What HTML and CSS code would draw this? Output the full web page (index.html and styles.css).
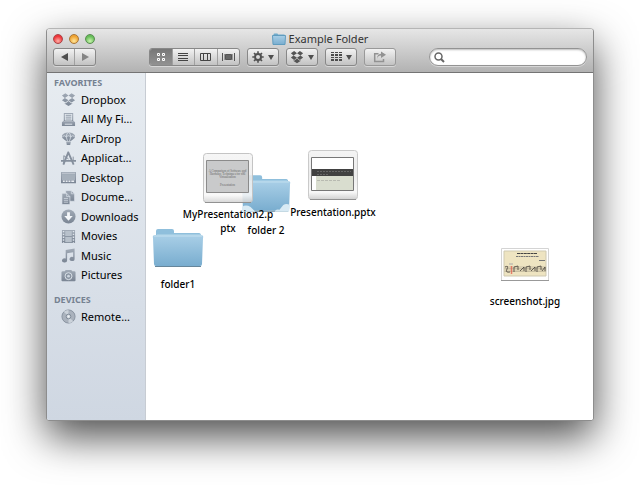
FILE: index.html
```html
<!DOCTYPE html>
<html lang="en">
<head>
<meta charset="utf-8">
<title>Example Folder</title>
<link rel="stylesheet" href="styles.css">
</head>
<body>
<svg class="defs" aria-hidden="true">
  <defs>
    <linearGradient id="blue" x1="0" y1="0" x2="0" y2="1"><stop offset="0" stop-color="#a9cfe7"/><stop offset="1" stop-color="#79adcf"/></linearGradient>
    <linearGradient id="frame" x1="0" y1="0" x2="0" y2="1"><stop offset="0" stop-color="#f4f4f4"/><stop offset=".5" stop-color="#ececec"/><stop offset=".85" stop-color="#f8f8f8"/><stop offset="1" stop-color="#d0d0d0"/></linearGradient>
    <linearGradient id="steel" x1="0" y1="0" x2="0" y2="1"><stop offset="0" stop-color="#a2abb7"/><stop offset="1" stop-color="#7a8594"/></linearGradient>
    <symbol id="dropbox" viewBox="0 0 16 16"><path d="M4.7 1.2 8 3.8 4.1 6.3 1 3.8zM11.3 1.2 15 3.8 11.9 6.3 8 3.8zM1 8.7 4.1 6.3 8 8.8 4.7 11.3zM15 8.7 11.9 6.3 8 8.8 11.3 11.3zM4 11.8 4.8 12.3 8 9.7 11.2 12.3 12 11.8V12.6L8 15 4 12.6z"/></symbol>
    <symbol id="folder" viewBox="0 0 52 40"><path d="M4 8V3Q4 1 6 1H20Q22 1 22 3V5H47Q49 5 49 8V14H4z" fill="#8fbfdc"/><path d="M5 7H48" stroke="#b6d8eb"/><path d="M1 10Q0 7 3 7H49Q52 7 51 10L50 36Q50 38 48 38H4Q2 38 2 36z" fill="url(#blue)"/><path d="M2 8H50" stroke="#c4e0ef" stroke-width="1"/><path d="M3 38.5H49" stroke="#66869b" stroke-width="1"/></symbol>
  </defs>
</svg>
<main class="window">
  <header class="toolbar">
    <div class="titlebar">
      <div class="lights">
        <button class="light red" aria-label="Close"></button>
        <button class="light amber" aria-label="Minimize"></button>
        <button class="light green" aria-label="Zoom"></button>
      </div>
      <h1 class="title">
        <svg width="14" height="12" viewBox="0 0 14 12"><path d="M1.5 2.5V1.5Q1.5 .5 2.5 .5H5Q6 .5 6 1.5H12.5V3H1.5z" fill="#6faacb"/><path d="M.5 2.5H13.5L13 11.5H1z" fill="url(#blue)" stroke="#609cbe"/></svg>
        Example Folder
      </h1>
    </div>
    <div class="tools">
      <div class="group nav">
        <button aria-label="Back"><svg width="9" height="8"><path d="M8 0V8L1 4z" fill="#4f4f4f"/></svg></button>
        <button aria-label="Forward"><svg width="9" height="8"><path d="M1 0V8L8 4z" fill="#858585"/></svg></button>
      </div>
      <div class="group views">
        <button class="active" aria-label="Icon view"><svg width="10" height="10" fill="none" stroke="#fff"><path d="M1.5 1.5h2v2h-2zM6.5 1.5h2v2h-2zM1.5 6.5h2v2h-2zM6.5 6.5h2v2h-2z"/></svg></button>
        <button aria-label="List view"><svg width="10" height="10" fill="#444"><path d="M0 1H10V2H0zM0 3H10V4H0zM0 6H10V7H0zM0 8H10V9H0z"/></svg></button>
        <button aria-label="Column view"><svg width="11" height="10" fill="none" stroke="#444"><path d="M.5 1.5H10.5V8.500H.5zM3.5 1.500V9M7.5 1.500V9"/></svg></button>
        <button aria-label="Cover flow"><svg width="13" height="10" stroke="#555"><path d="M.5 1V9M12.5 1V9" /><path d="M2.500 2V8M10.500 2V8" stroke="#999"/><path d="M3.500 2.500h6v5h-6z" fill="#666"/></svg></button>
      </div>
      <button class="tool" aria-label="Action"><svg width="12" height="12" viewBox="0 0 12 12"><circle cx="6" cy="6" r="3" fill="none" stroke="#505050" stroke-width="2"/><path d="M6 .3V2.5M6 9.5V11.7M.3 6H2.5M9.5 6H11.7M2 2 3.5 3.5M8.5 8.5 10 10M10 2 8.5 3.5M3.5 8.5 2 10" stroke="#505050" stroke-width="1.6"/></svg><svg class="caret" width="6" height="5"><path d="M0 0H6L3 5z"/></svg></button>
      <button class="tool" aria-label="Dropbox"><svg width="14" height="14" fill="#555"><use href="#dropbox"/></svg><svg class="caret" width="6" height="5"><path d="M0 0H6L3 5z"/></svg></button>
      <button class="tool" aria-label="Arrange"><svg width="11" height="10" viewBox="0 0 11 10" fill="#4c4c4c"><path d="M0 0H3V1H0zM4 0H7V1H4zM8 0H11V1H8zM0 2H3V4H0zM4 2H7V4H4zM8 2H11V4H8zM0 5H3V6H0zM4 5H7V6H4zM8 5H11V6H8zM0 7H3V9H0zM4 7H7V9H4zM8 7H11V9H8z"/></svg><svg class="caret" width="6" height="5"><path d="M0 0H6L3 5z"/></svg></button>
      <button class="tool share" aria-label="Share"><svg width="14" height="12" fill="none" stroke="#929292" stroke-width="1.5"><path d="M5.5 2.7H1.7V10.5H10.5V8"/><path d="M4 8Q4.5 4.5 8 4.5V7L13 3.7 8 .5V2.8Q4 3 4 8z" fill="#929292" stroke="none"/></svg></button>
      <label class="search"><svg width="11" height="11" fill="none" stroke="#666"><circle cx="4.5" cy="4.5" r="3.5" stroke-width="1.5"/><path d="M7 7 10 10" stroke-width="2"/></svg><input type="search" aria-label="Search"></label>
    </div>
  </header>
  <div class="content">
    <nav class="sidebar">
      <h2>FAVORITES</h2>
      <ul class="favorites">
        <li><a href="#"><svg viewBox="0 0 16 16"><use href="#dropbox"/></svg>Dropbox</a></li>
        <li><a href="#"><svg viewBox="0 0 16 16"><path d="M3 1H13V10H3zM4 2V9H12V2z" fill-rule="evenodd"/><path d="M5 3.500H11M5 5.500H11M5 7.500H11" stroke="#8d97a5"/><path d="M3 9 1 11V15H15V11L13 9V10.500H3z"/><path d="M4 13H12" stroke="#e4eaf0"/></svg>All My Fi…</a></li>
        <li><a href="#"><svg viewBox="0 0 16 16"><path d="M1 6C1 0 15 0 15 6 15 8 12 9 10 11H6C4 9 1 8 1 6z"/><path d="M1.5 6Q3.5 4 5.5 6 8 4 10.5 6 12.5 4 14.5 6M5.5 6 7 11M10.5 6 9 11M5.5 6Q6 2 8 1.5 10 2 10.5 6" fill="none" stroke="#dfe6ed" stroke-width=".8"/><path d="M5.5 11.5H10.5L9.8 15H6.2z"/></svg>AirDrop</a></li>
        <li><a href="#"><svg class="outline" viewBox="0 0 16 16"><path d="M8 1 2.5 14.5M7.5 1 13.5 14.5" stroke-width="2"/><path d="M0 10.5H16" stroke-width="2"/><path d="M3 5 8 8.5M3 5V14M13 6V10" stroke-width="1"/></svg>Applicat…</a></li>
        <li><a href="#"><svg viewBox="0 0 16 16"><path d="M0 2H16V14H0z"/><path d="M1 4.5H15V11H1z" fill="#a6b0bb"/><path d="M1 3.5H15" stroke="#c5cdd6"/><path d="M2 12H4M5 12H7M8 12H10M11 12H14" stroke="#e9edf2" stroke-width="1.5"/></svg>Desktop</a></li>
        <li><a href="#"><svg viewBox="0 0 16 16" stroke="#e1e7ee" stroke-width=".7"><path d="M5 .5H11L14.5 4V12H5z"/><path d="M1 3.5H6L9.5 7V15.5H1z"/><path d="M6 3.5V7H9.5M11 .5V4H14.5M3 9H7.5M3 11H7.5M3 13H7.5" fill="none"/></svg>Docume…</a></li>
        <li><a href="#"><svg viewBox="0 0 16 16"><circle cx="8" cy="8" r="7.5"/><path d="M6.5 3.5H9.5V7.5H12.5L8 12.5 3.5 7.5H6.5z" fill="#f4f7fa"/></svg>Downloads</a></li>
        <li><a href="#"><svg viewBox="0 0 16 16"><path d="M1 1H15V15H1z"/><path d="M4.5 2H11.5V7.5H4.5zM4.5 8.5H11.5V14H4.5z" fill="#b8c1cb"/><path d="M2.7 2V15M13.3 2V15" stroke="#dfe5ec" stroke-width="1.5" stroke-dasharray="1.5 1.5"/></svg>Movies</a></li>
        <li><a href="#"><svg viewBox="0 0 16 16"><path d="M5 2 14.5 .5V11.5A2.7 2.2 0 1 1 13 9.7V4.5L6.5 5.5V13A2.7 2.2 0 1 1 5 11.2z"/></svg>Music</a></li>
        <li><a href="#"><svg viewBox="0 0 16 16"><path d="M.5 4.5Q.5 3.5 2 3.5H4L5 2H11L12 3.5H14Q15.5 3.5 15.5 4.5V13Q15.5 14 14.5 14H1.5Q.5 14 .5 13z"/><circle cx="8" cy="8.7" r="3.7" fill="#8994a2" stroke="#dfe5ec"/><circle cx="8" cy="8.7" r="1.5" fill="#ced6df"/></svg>Pictures</a></li>
      </ul>
      <h2>DEVICES</h2>
      <ul>
        <li><a href="#"><svg viewBox="0 0 16 16"><circle cx="8" cy="8" r="7" fill="#aab2bd" stroke="#87919f"/><path d="M8 8 3 3Q5 1 8 1zM8 8 13 13Q11 15 8 15z" fill="#cbd2da"/><circle cx="8" cy="8" r="2.5" fill="#cbd2da" stroke="#7f8a98"/><circle cx="8" cy="8" r="1" fill="#f3f5f8"/></svg>Remote…</a></li>
      </ul>
    </nav>
    <section class="canvas" aria-label="Files">
      <figure class="file folder-two">
        <svg width="50" height="39" viewBox="0 0 52 40"><use href="#folder"/><path d="M1 34Q5 31 10 34L15 39H1zM35 39Q36 36 40 37L44 32Q47 30 51 32L50 39z" fill="#d8eaf4"/></svg>
        <figcaption>folder 2</figcaption>
      </figure>
      <figure class="file deck-two">
        <svg width="52" height="52" viewBox="0 0 52 52"><rect x="1.5" y="1.5" width="49" height="49" rx="3" fill="url(#frame)" fill-opacity=".86" stroke="#c4c4c4"/><path d="M3 50.5H49" stroke="#929292"/><path d="M4.5 8.5H46.5V40.5H4.5z" fill="#c9cacb" stroke="#8b8b8b"/><g class="slide-text"><text x="25.5" y="20">A Comparison of Software and</text><text x="25.5" y="23">Hardware Techniques for x86</text><text x="25.5" y="26">Virtualization</text><text x="25.5" y="34">Presentation</text></g></svg>
        <figcaption>MyPresentation2.p<br>ptx</figcaption>
      </figure>
      <figure class="file deck">
        <svg width="52" height="52" viewBox="0 0 52 52"><rect x="1.5" y="1.5" width="49" height="49" rx="3" fill="url(#frame)" stroke="#cacaca"/><path d="M3 50.5H49" stroke="#929292"/><path d="M4.5 8.5H46.5V41.5H4.5z" fill="#fff" stroke="#777"/><path d="M9 21H46V41H9z" fill="#d9ddcf"/><path d="M5 20H46V27H5z" fill="#414141"/><path d="M10 22.5H44M10 25.5H22" stroke="#666" stroke-dasharray="2 1"/><path d="M10 31.5H33" stroke="#b8bab1" stroke-dasharray="3 1"/></svg>
        <figcaption>Presentation.pptx</figcaption>
      </figure>
      <figure class="file folder-one">
        <svg width="52" height="40"><use href="#folder"/></svg>
        <figcaption>folder1</figcaption>
      </figure>
      <figure class="file photo">
        <svg width="50" height="35" viewBox="0 0 50 35"><path d="M1.5 1.5H48.5V33.5H1.5z" fill="#fff" stroke="#d4d4d4"/><path d="M1 33.5H49" stroke="#999"/><path d="M4 4H46V29H4z" fill="#eee4c1" stroke="#cfc9b0"/><path d="M17 6.5H37" stroke="#444" stroke-dasharray="3 .4"/><path d="M16 9.5H39" stroke="#777" stroke-dasharray="2 .5"/><path d="M39 13.5H45" stroke="#777"/><path d="M4.5 20H46M4.5 21.5H46M4.5 23H46M4.5 24.5H46" stroke="#8d8773" stroke-width=".4"/><path d="M5 20Q9 18 7 22T10 25M14 25V20L18 19V23M20 24 24 20V24M26 25V20L30 19V23M31 24 35 20V24M37 25V20L41 19V23M42 24 45 20V24" fill="none" stroke="#443f38" stroke-width=".8"/><path d="M9 17H13" stroke="#aaa"/><path d="M11.5 19V27" stroke="#e45d4c" stroke-width="1.5" opacity=".75"/></svg>
        <figcaption>screenshot.jpg</figcaption>
      </figure>
    </section>
  </div>
</main>
</body>
</html>
```
FILE: styles.css
```css
* { box-sizing: border-box; }

body {
  margin: 0;
  min-height: 100vh;
  padding: 28px 46px 64px;
  display: flex;
  background: #fff;
  color: #000;
  font-family: "Noto Sans", "Open Sans", sans-serif;
  font-size: 11px;
  line-height: 14px;
  overflow: hidden;
}

.defs { position: absolute; width: 0; height: 0; }

button, input { font: inherit; padding: 0; margin: 0; border: 0; background: none; }
h1, h2, ul, figure { margin: 0; padding: 0; }

.window {
  flex: 1;
  display: flex;
  flex-direction: column;
  border: 1px solid #8d8d8d;
  border-top-color: #b5b5b5;
  border-radius: 4px 4px 3px 3px;
  box-shadow: 0 16px 40px rgba(0, 0, 0, .7);
  overflow: hidden;
}

.toolbar {
  padding: 1px 6px 6px;
  border-bottom: 1px solid #747474;
  background: linear-gradient(#e6e6e6, #b2b2b2);
}

.titlebar {
  display: grid;
  grid-template-columns: 1fr auto 1fr;
  align-items: center;
  height: 18px;
}

.lights { display: flex; gap: 6px; }

.light {
  width: 10px;
  height: 10px;
  border: 1px solid;
  border-radius: 50%;
}

.red { border-color: #a94447; background: radial-gradient(circle at 50% 75%, #ffb1a8, #ef3539 65%); }
.amber { border-color: #a97636; background: radial-gradient(circle at 50% 75%, #ffe79b, #efa332 65%); }
.green { border-color: #598d50; background: radial-gradient(circle at 50% 75%, #cbf5ae, #66bd59 65%); }

.title {
  display: flex;
  align-items: center;
  gap: 3px;
  font-size: 11px;
  font-weight: 400;
  color: #333;
}

.tools { display: flex; gap: 7px; height: 18px; }

.group, .tool {
  display: flex;
  border: 1px solid #888;
  border-radius: 3px;
  background: linear-gradient(#f2f2f2, #c2c2c2);
  box-shadow: 0 1px 0 #d7d7d7;
}

.group button {
  flex: 1;
  display: flex;
  align-items: center;
  justify-content: center;
  border-left: 1px solid #a0a0a0;
}

.group button:first-child { border-left: 0; }
.group .active { background: linear-gradient(#777, #929292); }
.nav { width: 43px; margin-right: 46px; }
.views { width: 91px; overflow: hidden; }

.tool {
  width: 32px;
  align-items: center;
  justify-content: center;
  gap: 4px;
}

.caret { fill: #505050; }
.share { border-color: #999; }

.search {
  display: flex;
  align-items: center;
  gap: 4px;
  flex: 0 1 158px;
  min-width: 0;
  margin-left: auto;
  padding: 0 4px;
  border: 1px solid #939393;
  border-radius: 9px;
  background: #fff;
  box-shadow: inset 0 1px 2px #bbb, 0 1px 0 #d7d7d7;
}

.search input { flex: 1; min-width: 0; outline: 0; }

.content { flex: 1; display: flex; }

.sidebar {
  width: 99px;
  padding: 3px 7px;
  border-right: 1px solid #c7ccd3;
  background: linear-gradient(#e7ecf1, #cfd7e2);
}

.sidebar h2 {
  font-size: 9px;
  font-weight: 700;
  color: #768292;
}

.sidebar ul { list-style: none; }
.sidebar li { flex: 1; display: flex; align-items: center; min-height: 19px; }

.favorites {
  display: flex;
  flex-direction: column;
  height: 195px;
  margin-bottom: 8px;
}

.sidebar a {
  display: flex;
  align-items: center;
  gap: 5px;
  padding-left: 7px;
  color: #000;
  text-decoration: none;
  white-space: nowrap;
}

.sidebar svg { width: 15px; height: 15px; flex: none; fill: url(#steel); }
.sidebar .outline { fill: none; stroke: #858f9d; }

.canvas { position: relative; flex: 1; background: #fff; }

/* Files sit wherever they were dropped on the folder's free canvas. */
.file {
  position: absolute;
  display: flex;
  flex-direction: column;
  align-items: center;
  width: 100px;
  text-align: center;
  font-size: 10px;
  font-weight: 500;
}

.folder-two { left: 70px; top: 101px; gap: 10px; }
.deck-two { left: 32px; top: 79px; gap: 3px; }
.deck { left: 137px; top: 76px; gap: 4px; }
.folder-one { left: -18px; top: 155px; gap: 9px; }
.photo { left: 329px; top: 174px; gap: 12px; }

.slide-text { font-family: "Liberation Serif", serif; font-size: 3px; text-anchor: middle; fill: #666; }
```
